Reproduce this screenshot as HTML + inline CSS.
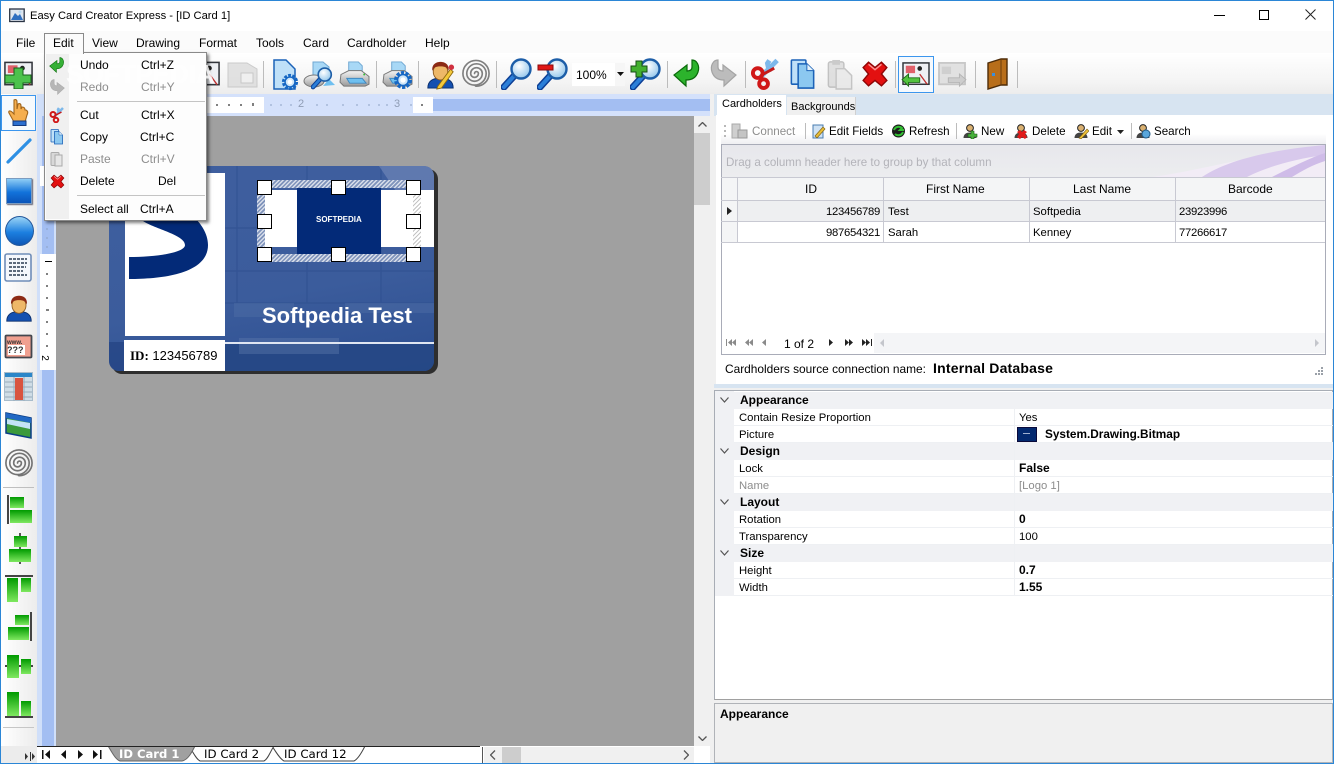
<!DOCTYPE html>
<html><head><meta charset="utf-8"><title>Easy Card Creator Express</title>
<style>
html,body{margin:0;padding:0;background:#f0f0f0}
#w{position:relative;width:1334px;height:764px;overflow:hidden;background:#f0f0f0;font:12px "Liberation Sans",sans-serif;color:#000}
#w div,#w span,#w svg.i{position:absolute}
.t{white-space:nowrap;line-height:14px;height:14px}
.g{color:#8d8d8d}
.b{font-weight:bold}
.sep{width:1px;background:#bcbcbc}
.h{width:13px;height:13px;background:#fff;border:1px solid #000}
.hl{left:721px;width:604px;height:1px;background:#c8c9d2}
.vl{width:1px;background:#c8c9d2}
.gh{left:715px;width:618px;height:17px;background:#f0f1f4}
.pl{left:734px;width:599px;height:1px;background:#eef0f3}
.p{font-size:11.3px;margin-top:1px}
.pb{font-size:12px;font-weight:bold}
.c{font-size:11.3px;margin-top:1px}
.n{letter-spacing:-.28px}
.tb{font-size:11.6px;margin-top:1px}
.ht{background:repeating-linear-gradient(135deg,#d8deea 0 1.400px,#7f93bb 1.400px 3px)}
</style></head><body>
<svg width="0" height="0" style="position:absolute"><defs>
<linearGradient id="gb" x1="0" y1="0" x2="0" y2="1"><stop offset="0" stop-color="#8fd0f5"/><stop offset=".5" stop-color="#1c7be0"/><stop offset="1" stop-color="#0a4fb0"/></linearGradient>
<linearGradient id="gg" x1="0" y1="0" x2="0" y2="1"><stop offset="0" stop-color="#009a00"/><stop offset="1" stop-color="#7fe860"/></linearGradient>
<radialGradient id="gl" cx=".4" cy=".35" r=".7"><stop offset="0" stop-color="#fff"/><stop offset="1" stop-color="#8fc4ea"/></radialGradient>
<linearGradient id="gp" x1="0" y1="0" x2="0" y2="1"><stop offset="0" stop-color="#f4f4f4"/><stop offset="1" stop-color="#9a9a9a"/></linearGradient>
<symbol id="gear" viewBox="0 0 20 20"><circle cx="10" cy="10" r="7" fill="none" stroke="#1667c4" stroke-width="4" stroke-dasharray="3 1.400"/><circle cx="10" cy="10" r="5.500" fill="#cfe6f8" stroke="#1667c4" stroke-width="1.600"/><circle cx="10" cy="10" r="2.600" fill="#fff"/></symbol>
<symbol id="mag" viewBox="0 0 32 32"><path d="M3 29 13 18" stroke="#0d3f95" stroke-width="7" stroke-linecap="round"/><path d="M3 29 13 18" stroke="#2c7fd8" stroke-width="4" stroke-linecap="round"/><circle cx="20" cy="11" r="9.500" fill="url(#gl)" stroke="#1d5ea8" stroke-width="2.400"/></symbol>
<symbol id="fp" viewBox="0 0 32 32"><path d="M15 16a2 2 0 0 1 4 0a4 4 0 0 1-8 0a6 6 0 0 1 12 0a8 8 0 0 1-16 0a10 10 0 0 1 20 0a12 12 0 0 1-24 0a13.500 13.500 0 0 1 27 0a13 13 0 0 1-14 13" fill="none" stroke="#737373" stroke-width="1.700" stroke-linecap="round"/></symbol>
<symbol id="arrow" viewBox="0 0 28 30"><path d="M19 1c5 0 8 6 6 12-2 6-7 8-12 8v6L1 16 14 6v6c3 0 5-1 5-4 0-3 0-5 0-7Z"/></symbol>
<symbol id="xmark" viewBox="0 0 26 26"><path d="M2 7 7 2l6 5 6-5 5 5-5 6 5 6-5 5-6-5-6 5-5-5 5-6Z" fill="#e31010" stroke="#8e0505" stroke-width="1.300"/><path d="M7 4l6 5 6-5" fill="none" stroke="#ff9090" stroke-width="1.400"/></symbol>
<symbol id="sc" viewBox="0 0 32 32"><path d="M28 2 11 19M20 2l-2 3 2 9" fill="none" stroke="#7db8ea" stroke-width="5"/><path d="M14 16 25 10" stroke="#c41a1a" stroke-width="3"/><circle cx="8" cy="15" r="5" fill="none" stroke="#d01818" stroke-width="4"/><circle cx="14" cy="26" r="4.500" fill="none" stroke="#d01818" stroke-width="4"/></symbol>
<symbol id="doc" viewBox="0 0 26 32"><rect x="1" y="1" width="15" height="25" rx="1" fill="#bfe0f8" stroke="#1b62b8" stroke-width="1.600"/><path d="M8 5h9l7 7v18H8Z" fill="#8cc8f0" stroke="#1b62b8" stroke-width="1.600"/><path d="M17 5v7h7" fill="#e5f3fc" stroke="#1b62b8"/></symbol>
<symbol id="prt" viewBox="0 0 34 30"><path d="M11 13V2h10l4 4v7Z" fill="#a8d8f6" stroke="#6fa7d2"/><path d="M3 15 11 11h13l8 6v8l-4 2H6l-4-4Z" fill="url(#gp)" stroke="#777"/><path d="M9 19h16l4 5H12Z" fill="#6fc0f0" stroke="#3e88c0"/><circle cx="27" cy="15" r="1" fill="#39c239"/></symbol>
<symbol id="man" viewBox="0 0 32 32"><path d="M2 31c0-8 6-11 14-11s14 3 14 11Z" fill="#1450b0" stroke="#0b2f6c"/><ellipse cx="16" cy="13" rx="8" ry="9" fill="#eeb868" stroke="#8c5a20"/><path d="M7 12C6 4 12 2 16 2s10 2 9 10c-2-4-4-5-9-5S9 8 7 12Z" fill="#8c2a14"/></symbol>
<symbol id="ca" viewBox="0 0 32 28"><rect x="2" y="1" width="28" height="23" fill="#eef0f4" stroke="#33363c" stroke-width="1.600"/><rect x="5" y="4" width="10" height="8" fill="#e0606a"/><circle cx="20" cy="7" r="2.500" fill="#222"/><path d="m20 13 8 11" stroke="#c03030" stroke-width="1.400"/></symbol>
<symbol id="tb" viewBox="0 0 16 16"><circle cx="8" cy="5" r="3.400" fill="#d9b070" stroke="#222"/><path d="M1.500 15c0-4 3-5.500 6.500-5.500s6.500 1.500 6.500 5.500Z" fill="#444"/></symbol>
</defs></svg>
<div id="w">
<!-- window frame -->
<div style="left:0;top:0;width:1334px;height:1px;background:#2b86d6"></div>
<div style="left:0;top:0;width:1px;height:764px;background:#2b86d6"></div>
<div style="left:1333px;top:0;width:1px;height:764px;background:#2b86d6"></div>
<div style="left:1px;top:1px;width:1332px;height:30px;background:#fff"></div>
<svg class="i" style="left:9px;top:8px" width="16" height="15" viewBox="0 0 16 15"><rect x=".7" y="1" width="14.500" height="12.500" fill="#dfe6ef" stroke="#2a3444" stroke-width="1.300"/><path d="M2 12 6 5l3 3 2-2 3 6Z" fill="#2f6fc0"/><circle cx="11" cy="4" r="1.500" fill="#b9d9f2"/></svg>
<span class="t" style="left:30px;top:9px;font-size:11.200px">Easy Card Creator Express - [ID Card 1]</span>
<div style="left:1214px;top:15px;width:11px;height:1px;background:#000"></div>
<div style="left:1259px;top:10px;width:8px;height:8px;border:1px solid #000"></div>
<svg class="i" style="left:1305px;top:9px" width="11" height="11" viewBox="0 0 11 11"><path d="M.5.500l10 10M10.500.500l-10 10" stroke="#222" fill="none"/></svg>
<!-- menu bar -->
<div style="left:1px;top:31px;width:1332px;height:22px;background:#fbfbfb"></div>
<span class="t" style="left:16px;top:36px">File</span>
<span class="t" style="left:53px;top:36px">Edit</span>
<span class="t" style="left:92px;top:36px">View</span>
<span class="t" style="left:136px;top:36px">Drawing</span>
<span class="t" style="left:199px;top:36px">Format</span>
<span class="t" style="left:256px;top:36px">Tools</span>
<span class="t" style="left:303px;top:36px">Card</span>
<span class="t" style="left:347px;top:36px">Cardholder</span>
<span class="t" style="left:425px;top:36px">Help</span>
<!-- toolbar -->
<div style="left:1px;top:53px;width:1332px;height:41px;background:linear-gradient(#fff,#f4f4f4 70%,#ececec)"></div>
<svg class="i" style="left:3px;top:61px" width="31" height="28"><use href="#ca"/><path d="M11 7h9v7h8v8h-8v6h-9v-6H2v-8h9Z" fill="#4cc24c" stroke="#18601c"/></svg>
<svg class="i" style="left:190px;top:61px" width="31" height="28"><use href="#ca"/></svg>
<svg class="i" style="left:227px;top:61px" width="31" height="27" viewBox="0 0 31 27" opacity=".8"><path d="M1 2 20 2 30 8V26H1Z" fill="#dcdcdc" stroke="#c0c0c0"/><rect x="14" y="12" width="12" height="10" fill="#eee" stroke="#bdbdbd"/></svg>
<div class="sep" style="left:263px;top:61px;height:27px"></div>
<svg class="i" style="left:273px;top:59px" width="26" height="32" viewBox="0 0 26 32"><path d="M1 1h12l9 9v20H1Z" fill="#bfe0f8" stroke="#1b62b8" stroke-width="1.500"/><use href="#gear" x="8" y="14" width="18" height="18"/></svg>
<svg class="i" style="left:303px;top:60px" width="32" height="30" viewBox="0 0 32 30"><path d="M10 2h10l6 5v12H10Z" fill="#a8d8f6" stroke="#6fa7d2"/><ellipse cx="11" cy="21" rx="10" ry="6" fill="url(#gp)" stroke="#777"/><path d="M26 19 32 25 20 26Z" fill="#6fc0f0"/><use href="#mag" x="8" y="6" width="22" height="24"/></svg>
<svg class="i" style="left:338px;top:60px" width="33" height="29"><use href="#prt"/></svg>
<div class="sep" style="left:376px;top:61px;height:27px"></div>
<svg class="i" style="left:381px;top:60px" width="33" height="30" viewBox="0 0 33 30"><use href="#prt" width="33" height="29"/><use href="#gear" x="12" y="10" width="20" height="20"/></svg>
<div class="sep" style="left:418px;top:61px;height:27px"></div>
<svg class="i" style="left:426px;top:59px" width="29" height="31" viewBox="0 0 32 32"><use href="#man"/><path d="M13 29 27 10l3 3-13 18-5 1Z" fill="#f4c93c" stroke="#8f6a10"/><circle cx="28" cy="8" r="3" fill="#d03040"/></svg>
<svg class="i" style="left:460px;top:58px" width="31" height="31" opacity=".9"><use href="#fp"/></svg>
<div class="sep" style="left:496px;top:61px;height:27px"></div>
<svg class="i" style="left:501px;top:58px" width="32" height="32"><use href="#mag"/></svg>
<svg class="i" style="left:537px;top:58px" width="32" height="32"><use href="#mag"/><rect x="1" y="7" width="15" height="5" fill="#e01818" stroke="#8c0a0a"/></svg>
<div style="left:572px;top:63px;width:53px;height:23px;background:#fff"></div>
<div style="left:615px;top:63px;width:10px;height:23px;background:#f6f6f6"></div>
<span class="t" style="left:576px;top:68px">100%</span>
<svg class="i" style="left:617px;top:72px" width="7" height="4"><path d="M0 0h7L3.500 4Z" fill="#111"/></svg>
<svg class="i" style="left:630px;top:58px" width="32" height="32"><use href="#mag"/><path d="M6 3h6v5h5v6h-5v5H6v-5H1V8h5Z" fill="#43b02f" stroke="#144d14"/></svg>
<div class="sep" style="left:667px;top:61px;height:27px"></div>
<svg class="i" style="left:673px;top:59px" width="28" height="30" fill="#2cb32c" stroke="#0a6a0a" stroke-width="1.200"><use href="#arrow"/></svg>
<svg class="i" style="left:709px;top:59px;transform:scaleX(-1)" width="28" height="30" fill="#bcbcbc" stroke="#a4a4a4" stroke-width="1.200"><use href="#arrow"/></svg>
<div class="sep" style="left:745px;top:61px;height:27px"></div>
<svg class="i" style="left:750px;top:58px" width="31" height="32"><use href="#sc"/></svg>
<svg class="i" style="left:790px;top:59px" width="26" height="31"><use href="#doc"/></svg>
<svg class="i" style="left:827px;top:59px" width="26" height="31" viewBox="0 0 26 32" opacity=".75"><rect x="1" y="3" width="16" height="26" rx="2" fill="#d8d8d8" stroke="#b0b0b0" stroke-width="1.500"/><rect x="5" y="1" width="8" height="5" fill="#bbb"/><path d="M9 10h9l7 7v14H9Z" fill="#e6e6e6" stroke="#b5b5b5" stroke-width="1.500"/></svg>
<svg class="i" style="left:861px;top:60px" width="28" height="28"><use href="#xmark"/></svg>
<div class="sep" style="left:895px;top:61px;height:27px"></div>
<div style="left:898px;top:56px;width:34px;height:35px;border:1px solid #3b96ee;background:#f5f9fd"></div>
<svg class="i" style="left:901px;top:62px" width="30" height="26" viewBox="0 0 32 28"><use href="#ca"/><path d="M1 19 8 13v4h12v5H8v4Z" fill="#53c23f" stroke="#1b6a16"/></svg>
<svg class="i" style="left:937px;top:62px" width="30" height="26" viewBox="0 0 32 28" opacity=".8"><rect x="2" y="1" width="28" height="23" fill="#dcdcdc" stroke="#bcbcbc" stroke-width="2"/><rect x="5" y="5" width="10" height="8" fill="#c6c6c6"/><path d="M31 19 24 13v4H12v5h12v4Z" fill="#c4c4c4" stroke="#a5a5a5"/></svg>
<div class="sep" style="left:975px;top:61px;height:27px"></div>
<svg class="i" style="left:987px;top:58px" width="21" height="32" viewBox="0 0 21 32"><path d="M1 5 14 1h6v26h-6L1 31Z" fill="#b86e1a" stroke="#4e2c08" stroke-width="1.400"/><path d="M14 1v26" stroke="#6a3c0c"/><rect x="5" y="15" width="3" height="3" fill="#3d8ed8"/></svg>
<div class="sep" style="left:1017px;top:61px;height:27px"></div>
<!-- left toolbar -->
<div style="left:1px;top:94px;width:36px;height:652px;background:linear-gradient(90deg,#fff,#ececec)"></div>
<div style="left:1px;top:95px;width:33px;height:34px;border:1px solid #3b96ee;background:#f6fafd"></div>
<svg class="i" style="left:7px;top:98px" width="22" height="29" viewBox="0 0 22 29"><path d="M7 2c2-1 3 0 3 2v7l1-5c2-1 3 0 3 2v3l1-2c2 0 3 1 3 3l1 0c2 1 2 3 1 5l-2 7H7l-5-9c-1-2 1-3 3-1l2 2Z" fill="#f5ae4e" stroke="#a0651c" stroke-width="1.100"/><rect x="6" y="23" width="13" height="4.500" fill="#2a6fd0" stroke="#123a80"/></svg>
<svg class="i" style="left:5px;top:137px" width="28" height="30"><path d="M3 25 25 3" stroke="#2e90e4" stroke-width="3.200" stroke-linecap="round"/></svg>
<div style="left:6px;top:178px;width:26px;height:26px;background:linear-gradient(#8fcdf5,#1273db 55%,#0a53b8);box-shadow:1px 1px 1px #667;border:1px solid #7c9cc0;box-sizing:border-box"></div>
<div style="left:5px;top:216px;width:29px;height:30px;border-radius:50%;background:linear-gradient(#9ad4f6,#1c7fe0 55%,#0d56b6);border:1px solid #24589c;box-sizing:border-box"></div>
<svg class="i" style="left:4px;top:253px" width="28" height="30" viewBox="0 0 28 30"><rect x="1" y="1" width="26" height="27" rx="2" fill="#f4f7fc" stroke="#6f8db8" stroke-width="1.600"/><path d="M5 6h18M5 10h18M5 14h17M5 18h14M5 22h18" stroke="#5c6a7c" stroke-width="2" stroke-dasharray="3 1"/></svg>
<svg class="i" style="left:5px;top:292px" width="28" height="32"><use href="#man"/></svg>
<svg class="i" style="left:4px;top:334px" width="29" height="26" viewBox="0 0 29 26"><rect x="1.500" y="1.500" width="26" height="22" rx="1" fill="#f0a090" stroke="#44474e" stroke-width="1.800"/><rect x="4" y="11" width="17" height="10" fill="#fff"/><text x="3" y="10" font-family="Liberation Sans,sans-serif" font-size="6" font-weight="bold" fill="#333">www.</text><text x="3" y="19" font-family="Liberation Sans,sans-serif" font-size="9" font-weight="bold" fill="#333">???</text></svg>
<svg class="i" style="left:4px;top:372px" width="29" height="30" viewBox="0 0 29 30"><rect x=".5" y=".5" width="28" height="28" fill="#cfdde6" stroke="#a8bccb"/><rect x="1" y="1" width="27" height="4" fill="#2b86c8"/><path d="M1 10h27M1 15h27M1 20h27M1 25h27M10 5v24M20 5v24" stroke="#98acba"/><rect x="11" y="6" width="8" height="22" fill="#d9543f"/></svg>
<svg class="i" style="left:5px;top:411px" width="27" height="29" viewBox="0 0 27 29"><path d="M1 2 26 7V27L1 22Z" fill="#3c9a3c" stroke="#0a3d86" stroke-width="1.500"/><path d="M1 2 26 7v5L1 7Z" fill="#2168c4"/><path d="M2 8 25 12V18L2 13Z" fill="#c4e3f6"/></svg>
<svg class="i" style="left:3px;top:447px" width="31" height="32"><use href="#fp"/></svg>
<div style="left:3px;top:487px;width:31px;height:1px;background:#bfbfbf"></div>
<svg class="i" style="left:5px;top:495px" width="29" height="30"><rect x="2" y="0" width="2" height="29" fill="#444"/><rect x="5" y="2" width="14" height="11" fill="url(#gg)"/><rect x="5" y="15" width="22" height="13" fill="url(#gg)"/></svg>
<svg class="i" style="left:8px;top:533px" width="26" height="31"><rect x="11" y="0" width="2" height="31" fill="#555"/><rect x="6" y="3" width="13" height="11" fill="url(#gg)"/><rect x="1" y="16" width="22" height="13" fill="url(#gg)"/></svg>
<svg class="i" style="left:4px;top:574px" width="30" height="30"><rect x="1" y="1" width="28" height="2" fill="#444"/><rect x="3" y="4" width="11" height="24" fill="url(#gg)"/><rect x="17" y="4" width="10" height="14" fill="url(#gg)"/></svg>
<svg class="i" style="left:6px;top:612px" width="29" height="30"><rect x="24" y="0" width="2" height="29" fill="#444"/><rect x="9" y="3" width="14" height="10" fill="url(#gg)"/><rect x="2" y="15" width="21" height="13" fill="url(#gg)"/></svg>
<svg class="i" style="left:4px;top:654px" width="30" height="26"><rect x="1" y="11" width="28" height="2" fill="#444"/><rect x="3" y="1" width="12" height="23" fill="url(#gg)"/><rect x="17" y="5" width="10" height="15" fill="url(#gg)"/></svg>
<svg class="i" style="left:4px;top:690px" width="30" height="30"><rect x="1" y="26" width="28" height="2" fill="#444"/><rect x="3" y="2" width="12" height="24" fill="url(#gg)"/><rect x="17" y="11" width="10" height="15" fill="url(#gg)"/></svg>
<div style="left:3px;top:727px;width:31px;height:1px;background:#c6c6c6"></div>
<div style="left:1px;top:746px;width:36px;height:17px;background:#ececec"></div>
<svg class="i" style="left:25px;top:752px" width="10" height="9"><path d="M0 1v7l3-3.500ZM5 0h1v9H5ZM7 1v7l3-3.500Z" fill="#333"/></svg>
<!-- rulers -->
<div style="left:37px;top:94px;width:673px;height:22px;background:#d4e1fb"></div>
<div style="left:37px;top:94px;width:19px;height:652px;background:#d0dff9"></div>
<div style="left:42px;top:116px;width:12px;height:630px;background:#a3bef2"></div>
<div style="left:433px;top:99px;width:277px;height:12px;background:#a3bef2"></div>
<div style="left:207px;top:97px;width:57px;height:16px;background:#fff"></div>
<div style="left:413px;top:97px;width:20px;height:16px;background:#fff"></div>
<svg class="i" style="left:207px;top:97px" width="226" height="16" viewBox="0 0 226 16"><path d="M10 7v2M22 7v2M34 7v2M46 6v3M215 7v2" stroke="#000"/><path d="M64 7v2M74 7v2M84 7v2M110 7v2M120 7v2M136 7v2M150 7v2M162 7v2M172 7v2M180 7v2M204 7v2" stroke="#8ea3c4"/></svg>
<span class="t" style="left:298px;top:97px;color:#8f9db5;font-size:11px">2</span>
<span class="t" style="left:394px;top:97px;color:#8f9db5;font-size:11px">3</span>
<div style="left:40px;top:254px;width:16px;height:116px;background:#fff"></div>
<div style="left:40px;top:166px;width:19px;height:20px;background:#fff"></div>
<svg class="i" style="left:40px;top:225px" width="16" height="145" viewBox="0 0 16 145"><path d="M6 4h2M6 13h2M6 22h2" stroke="#8ea3c4"/><path d="M5 36.500h7M6 49h2M6 61h2M6 73h2M6 85h3M6 97h2M6 109h2M6 121h2" stroke="#000"/></svg>
<span class="t" style="left:41px;top:351px;font-size:10px;transform:rotate(90deg)">2</span>
<!-- canvas -->
<div style="left:59px;top:116px;width:635px;height:630px;background:#a0a0a0"></div>
<div style="left:56px;top:186px;width:3px;height:560px;background:#a0a0a0"></div>
<!-- card -->
<div style="left:112px;top:169px;width:326px;height:205px;border-radius:10px;background:#2e2e2e"></div>
<div style="left:109px;top:166px;width:325px;height:205px;border-radius:10px;overflow:hidden;background:linear-gradient(170deg,#3f5f9f,#3b5c9c 60%,#2c4e90)">
<svg width="325" height="205" style="position:absolute;left:0;top:0"><path d="M128 0v137M198 0v137M272 0v137M116 137h209M116 105h209M116 62h209" stroke="#2f5090" stroke-width="1.200" fill="none" opacity=".7"/><path d="M270 0h55v40h-28Z" fill="#6d84b6" opacity=".7"/><path d="M0 176h116v29H0Z" fill="#1f3f7e" opacity=".6"/><path d="M116 178h209v27H116Z" fill="#254784" opacity=".85"/><path d="M130 172h100v16H130Z" fill="#5b78aa" opacity=".45"/><path d="M125 137h60v14h-60ZM236 137h89v10H236Z" fill="#4f6ea6" opacity=".45"/></svg>
<div style="left:16px;top:7px;width:100px;height:163px;background:#fff;overflow:hidden"><svg width="100" height="163"><path d="M18 48C30 56 60 62 60 72C60 80 30 84 4 84V106C40 106 83 100 83 72C83 60 75 50 70 45Z" fill="#032a78"/></svg></div>
<div style="left:15px;top:174px;width:101px;height:31px;background:#fff"></div>
<div style="left:116px;top:176px;width:209px;height:1.500px;background:#dfe6f2"></div>
<div style="left:156px;top:24px;width:32px;height:57px;background:#fff"></div>
<div style="left:188px;top:21px;width:84px;height:67px;background:#032a78"></div>
<div style="left:272px;top:24px;width:53px;height:57px;background:#fff"></div>
<div class="ht" style="left:148px;top:14px;width:164px;height:8px"></div>
<div class="ht" style="left:148px;top:88px;width:164px;height:8px"></div>
<div class="ht" style="left:148px;top:14px;width:8px;height:82px"></div>
<div style="left:304px;top:14px;width:8px;height:82px;background:repeating-linear-gradient(135deg,#c4c4c4 0 1px,#fff 1px 3px)"></div>
<span class="t b" style="left:207px;top:47px;color:#fff;font-size:8px">SOFTPEDIA</span>
<span class="t b" style="left:153px;top:138px;color:#fff;font-size:22px;line-height:24px;height:24px;white-space:nowrap">Softpedia Test</span>
<span class="t" style="left:21px;top:182px;font:13px 'Liberation Sans',sans-serif;white-space:nowrap"><b style="font-family:'Liberation Serif',serif">ID:</b> 123456789</span>
</div>
<div class="h" style="left:257px;top:180px"></div><div class="h" style="left:331px;top:180px"></div><div class="h" style="left:406px;top:180px"></div>
<div class="h" style="left:257px;top:214px"></div><div class="h" style="left:406px;top:214px"></div>
<div class="h" style="left:257px;top:247px"></div><div class="h" style="left:331px;top:247px"></div><div class="h" style="left:406px;top:247px"></div>
<!-- popup menu -->
<div style="left:44px;top:33px;width:38px;height:20px;border:1px solid #8a8a8a;border-bottom:none;background:#fbfbfb;z-index:3"></div>
<span class="t" style="left:53px;top:36px;z-index:4">Edit</span>
<div style="left:44px;top:52px;width:161px;height:167px;background:#fdfdfd;border:1px solid #8a8a8a;box-shadow:2px 2px 3px rgba(0,0,0,.5);z-index:2">
<div style="left:1px;top:1px;width:23px;height:165px;background:#f0f0f0"></div>
<span class="t" style="left:21px;top:8px;font-size:26px;font-weight:bold;color:#fff;line-height:26px;height:26px;opacity:.8">SOFTPEDIA</span>
<div style="left:32px;top:48px;width:128px;height:1px;background:#c4c4c4"></div>
<div style="left:32px;top:142px;width:128px;height:1px;background:#c4c4c4"></div>
<span class="t" style="left:35px;top:5px">Undo</span><span class="t" style="left:96px;top:5px">Ctrl+Z</span>
<span class="t g" style="left:35px;top:27px">Redo</span><span class="t g" style="left:96px;top:27px">Ctrl+Y</span>
<span class="t" style="left:35px;top:55px">Cut</span><span class="t" style="left:96px;top:55px">Ctrl+X</span>
<span class="t" style="left:35px;top:77px">Copy</span><span class="t" style="left:95px;top:77px">Ctrl+C</span>
<span class="t g" style="left:35px;top:99px">Paste</span><span class="t g" style="left:96px;top:99px">Ctrl+V</span>
<span class="t" style="left:35px;top:121px">Delete</span><span class="t" style="left:113px;top:121px">Del</span>
<span class="t" style="left:35px;top:149px">Select all</span><span class="t" style="left:95px;top:149px">Ctrl+A</span>
<svg class="i" style="left:4px;top:4px" width="16" height="17" fill="#35b035" stroke="#0a6a0a"><use href="#arrow"/></svg>
<svg class="i" style="left:4px;top:26px;transform:scaleX(-1)" width="16" height="17" fill="#b6b6b6" stroke="#aaa"><use href="#arrow"/></svg>
<svg class="i" style="left:4px;top:54px" width="16" height="16"><use href="#sc"/></svg>
<svg class="i" style="left:5px;top:76px" width="14" height="16"><use href="#doc"/></svg>
<svg class="i" style="left:5px;top:98px" width="14" height="16" viewBox="0 0 26 32"><rect x="1" y="3" width="16" height="26" rx="2" fill="#d8d8d8" stroke="#aaa" stroke-width="2"/><path d="M9 8h14v22H9Z" fill="#e6e6e6" stroke="#aaa" stroke-width="2"/></svg>
<svg class="i" style="left:5px;top:121px" width="15" height="15"><use href="#xmark"/></svg>
</div>
<!-- v scroll -->
<div style="left:694px;top:116px;width:16px;height:630px;background:#f0f0f0"></div>
<div style="left:694px;top:133px;width:16px;height:72px;background:#cdcdcd"></div>
<svg class="i" style="left:698px;top:122px" width="9" height="5"><path d="M.5 4.500 4.500.500l4 4" fill="none" stroke="#555" stroke-width="1.300"/></svg>
<svg class="i" style="left:698px;top:736px" width="9" height="5"><path d="M.5.500l4 4 4-4" fill="none" stroke="#555" stroke-width="1.300"/></svg>
<!-- bottom tabs -->
<div style="left:37px;top:746px;width:673px;height:17px;background:#fff"></div>
<div style="left:1px;top:763px;width:1332px;height:1px;background:#2b86d6"></div>
<svg class="i" style="left:40px;top:749px" width="64" height="11" viewBox="0 0 64 11"><path d="M2 1h1.500v9H2ZM10 1v9L5 5.500ZM26 1v9l-5-4.500ZM38 1v9l5-4.500ZM53 1v9l5-4.500ZM60 1h1.500v9H60Z" fill="#111"/></svg>
<svg class="i" style="left:108px;top:746px" width="260" height="17" viewBox="0 0 260 17"><path d="M164 0C168 6 172 13 176 15H246C250 13 254 6 257 0" fill="#fff" stroke="#444"/><path d="M81 0C85 6 88 13 92 15H156C160 13 162 6 166 0" fill="#fff" stroke="#444"/><path d="M0 0C4 6 7 13 12 15H74C80 14 84 6 87 0Z" fill="#a0a0a0" stroke="#666"/></svg>
<div style="left:37px;top:746px;width:443px;height:1px;background:#222"></div>
<span class="t" style="left:119px;top:747px;color:#fff;font:bold 11.600px/14px 'DejaVu Sans',sans-serif">ID Card 1</span>
<span class="t" style="left:204px;top:747px;font:11.800px/14px 'DejaVu Sans',sans-serif">ID Card 2</span>
<span class="t" style="left:284px;top:747px;font:11.800px/14px 'DejaVu Sans',sans-serif">ID Card 12</span>
<div style="left:484px;top:747px;width:210px;height:16px;background:#f0f0f0"></div>
<div style="left:482px;top:747px;width:1px;height:16px;background:#555"></div>
<div style="left:502px;top:747px;width:19px;height:16px;background:#cdcdcd"></div>
<svg class="i" style="left:490px;top:750px" width="6" height="10"><path d="M5 .500.500 5 5 9.500" fill="none" stroke="#555" stroke-width="1.300"/></svg>
<svg class="i" style="left:683px;top:750px" width="6" height="10"><path d="M1 .500 5.500 5 1 9.500" fill="none" stroke="#555" stroke-width="1.300"/></svg>
<!-- right panel -->
<div style="left:714px;top:94px;width:619px;height:22px;background:#d7e4f1"></div>
<div style="left:716px;top:115px;width:617px;height:269px;background:#fff;border-bottom:1px solid #d0d4d8"></div>
<div style="left:717px;top:95px;width:69px;height:21px;background:#fff;"></div>
<span class="t" style="left:722px;top:97px;font-size:11px">Cardholders</span>
<div style="left:787px;top:97px;width:69px;height:18px;background:#f0f0f0;border-right:1px solid #d0d0d0;box-sizing:border-box"></div>
<span class="t" style="left:791px;top:100px;font-size:11px">Backgrounds</span>
<!-- grid toolbar -->
<div style="left:721px;top:118px;width:605px;height:26px;background:linear-gradient(#fff,#fff 60%,#efeff2)"></div>
<svg class="i" style="left:724px;top:124px" width="3" height="15"><path d="M0 1h2v2H0ZM0 6h2v2H0ZM0 11h2v2H0Z" fill="#b8b8b8"/></svg>
<svg class="i" style="left:731px;top:123px" width="17" height="16"><rect x="1" y="1" width="8" height="14" fill="#cfcfcf" stroke="#aaa"/><rect x="7" y="7" width="9" height="8" fill="#c4c4c4" stroke="#999"/></svg>
<span class="t g tb" style="left:752px;top:124px">Connect</span>
<div class="sep" style="left:805px;top:123px;height:16px"></div>
<svg class="i" style="left:812px;top:124px" width="14" height="15" viewBox="0 0 14 15"><rect x="1" y="1" width="10" height="13" fill="#cfe2f4" stroke="#4a7cb0"/><path d="M3 12 11 3l2 2-8 9Z" fill="#e8bd37" stroke="#80651a" stroke-width=".7"/></svg>
<span class="t tb" style="left:829px;top:124px">Edit Fields</span>
<svg class="i" style="left:891px;top:123px" width="15" height="16" viewBox="0 0 15 16"><circle cx="7.500" cy="8" r="6.500" fill="#1c1c1c"/><path d="M3 7a5 5 0 0 1 8-2l-2 2h4" fill="none" stroke="#33c033" stroke-width="2"/><path d="M12 9a5 5 0 0 1-8 2" fill="none" stroke="#33c033" stroke-width="2"/></svg>
<span class="t tb" style="left:909px;top:124px">Refresh</span>
<div class="sep" style="left:956px;top:123px;height:16px"></div>
<svg class="i" style="left:962px;top:123px" width="16" height="16"><use href="#tb"/><path d="M9 8h3v3h3v3h-3v2H9v-2H6v-3h3Z" fill="#47b03b" stroke="#1a5a17" stroke-width=".6"/></svg>
<span class="t tb" style="left:981px;top:124px">New</span>
<svg class="i" style="left:1013px;top:123px" width="16" height="16"><use href="#tb"/><path d="m7 7 2 2 2-2 3 2-2 2 2 3-2 2-3-2-2 2-3-2 2-3-2-2Z" fill="#e01a1a"/></svg>
<span class="t tb" style="left:1032px;top:124px">Delete</span>
<svg class="i" style="left:1073px;top:123px" width="16" height="16"><use href="#tb"/><path d="M6 15 14 6l2 2-8 8Z" fill="#eec23a" stroke="#7c5d10" stroke-width=".6"/></svg>
<span class="t tb" style="left:1092px;top:124px">Edit</span>
<svg class="i" style="left:1117px;top:130px" width="7" height="4"><path d="M0 0h7L3.500 4Z" fill="#222"/></svg>
<div class="sep" style="left:1131px;top:123px;height:16px"></div>
<svg class="i" style="left:1135px;top:123px" width="16" height="16"><use href="#tb"/><circle cx="11" cy="11" r="4" fill="#59a6dc" stroke="#225a88"/></svg>
<span class="t tb" style="left:1154px;top:124px">Search</span>
<!-- grid -->
<div style="left:721px;top:144px;width:603px;height:209px;border:1px solid #a9acb8;background:#fff"></div>
<div style="left:722px;top:145px;width:603px;height:32px;background:linear-gradient(#e7e7ec,#ecedef);overflow:hidden">
<svg width="603" height="32" style="position:absolute;left:0;top:0"><path d="M430 32C480 25 540 8 600 0h3v32Z" fill="#f2ecf6"/><path d="M480 32C510 12 560 4 603 0v10C570 14 540 24 525 32Z" fill="#d8c9ec"/><path d="M550 32C570 22 590 12 603 8v8C590 20 580 26 570 32Z" fill="#cfbce8"/></svg>
<span class="t" style="left:4px;top:11px;color:#b3b3b9;font-size:11.600px">Drag a column header here to group by that column</span></div>
<div class="hl" style="top:177px"></div>
<div style="left:722px;top:178px;width:603px;height:22px;background:#f4f5f6"></div>
<div class="hl" style="top:200px"></div>
<div style="left:722px;top:201px;width:15px;height:42px;background:#f4f5f6"></div>
<div style="left:737px;top:201px;width:588px;height:20px;background:#eeeff1"></div>
<div class="hl" style="top:221px"></div>
<div class="hl" style="top:242px"></div>
<div class="vl" style="left:737px;top:178px;height:65px"></div>
<div class="vl" style="left:883px;top:178px;height:65px"></div>
<div class="vl" style="left:1029px;top:178px;height:65px"></div>
<div class="vl" style="left:1175px;top:178px;height:65px"></div>
<span class="t" style="left:805px;top:182px">ID</span>
<span class="t" style="left:926px;top:182px">First Name</span>
<span class="t" style="left:1073px;top:182px">Last Name</span>
<span class="t" style="left:1228px;top:182px">Barcode</span>
<svg class="i" style="left:727px;top:207px" width="5" height="8"><path d="M0 0v8l5-4Z" fill="#222"/></svg>
<span class="t c n" style="left:826px;top:204px">123456789</span>
<span class="t c" style="left:888px;top:204px">Test</span>
<span class="t c" style="left:1033px;top:204px">Softpedia</span>
<span class="t c n" style="left:1179px;top:204px">23923996</span>
<span class="t c n" style="left:826px;top:225px">987654321</span>
<span class="t c" style="left:888px;top:225px">Sarah</span>
<span class="t c" style="left:1033px;top:225px">Kenney</span>
<span class="t c n" style="left:1179px;top:225px">77266617</span>
<div style="left:722px;top:333px;width:603px;height:20px;background:#f4f5f7"></div>
<div style="left:722px;top:333px;width:152px;height:20px;background:#fff"></div>
<svg class="i" style="left:725px;top:338px" width="148" height="9" viewBox="0 0 148 9"><path d="M1 1h1v7H1ZM7 1v7L3 4.500ZM11 1v7L7 4.500ZM24 1v7l-4-3.500ZM28 1v7l-4-3.500ZM41 1v7l-4-3.500Z" fill="#8a8a8a"/><path d="M104 1v7l4-3.500ZM120 1v7l4-3.500ZM124 1v7l4-3.500ZM137 1v7l4-3.500ZM141 1v7l4-3.500ZM146 1h1v7h-1Z" fill="#222"/></svg>
<span class="t" style="left:784px;top:337px">1 of 2</span>
<svg class="i" style="left:880px;top:339px;" width="5" height="8"><path d="M4 0v8L0 4Z" fill="#c4c6cc"/></svg>
<svg class="i" style="left:1315px;top:339px;" width="5" height="8"><path d="M0 0v8l4-4Z" fill="#c4c6cc"/></svg>
<span class="t" style="left:725px;top:362px;font-size:11.900px">Cardholders source connection name:</span>
<span class="t b" style="left:933px;top:361px;font-size:14px;letter-spacing:.2px">Internal Database</span>
<svg class="i" style="left:1313px;top:366px" width="11" height="11"><path d="M8 1h2v2H8ZM5 4h2v2H5ZM8 4h2v2H8ZM2 7h2v2H2ZM5 7h2v2H5ZM8 7h2v2H8Z" fill="#9aa0a8"/></svg>
<!-- props -->
<div style="left:714px;top:384px;width:619px;height:4px;background:#d7e4f1"></div>
<div style="left:714px;top:390px;width:619px;height:310px;background:#fff;border:1px solid #a8adb5;border-bottom:1px solid #a0a0a0;box-sizing:border-box"></div>
<div style="left:715px;top:391px;width:19px;height:205px;background:#f0f1f4"></div>
<div class="gh" style="top:392px"></div><div class="gh" style="top:443px"></div><div class="gh" style="top:494px"></div><div class="gh" style="top:545px"></div>
<div class="pl" style="top:425px"></div><div class="pl" style="top:442px"></div><div class="pl" style="top:476px"></div><div class="pl" style="top:493px"></div><div class="pl" style="top:527px"></div><div class="pl" style="top:544px"></div><div class="pl" style="top:578px"></div><div class="pl" style="top:595px"></div>
<div class="vl" style="left:1014px;top:409px;height:187px;background:#eef0f3"></div>
<svg class="i" style="left:720px;top:397px" width="9" height="6"><path d="M.5.500 4.500 5l4-4.500" fill="none" stroke="#555" stroke-width="1.200"/></svg>
<svg class="i" style="left:720px;top:448px" width="9" height="6"><path d="M.5.500 4.500 5l4-4.500" fill="none" stroke="#555" stroke-width="1.200"/></svg>
<svg class="i" style="left:720px;top:499px" width="9" height="6"><path d="M.5.500 4.500 5l4-4.500" fill="none" stroke="#555" stroke-width="1.200"/></svg>
<svg class="i" style="left:720px;top:550px" width="9" height="6"><path d="M.5.500 4.500 5l4-4.500" fill="none" stroke="#555" stroke-width="1.200"/></svg>
<span class="t pb" style="left:740px;top:393px">Appearance</span>
<span class="t p" style="left:739px;top:410px">Contain Resize Proportion</span><span class="t p" style="left:1019px;top:410px">Yes</span>
<span class="t p" style="left:739px;top:427px">Picture</span>
<div style="left:1017px;top:427px;width:18px;height:13px;background:#03296f;border:1px solid #0a0a3a"></div><div style="left:1023px;top:433px;width:7px;height:1px;background:#9fb0d0"></div>
<span class="t pb" style="left:1045px;top:427px;font-size:11.800px">System.Drawing.Bitmap</span>
<span class="t pb" style="left:740px;top:444px">Design</span>
<span class="t p" style="left:739px;top:461px">Lock</span><span class="t pb" style="left:1019px;top:461px">False</span>
<span class="t p" style="left:739px;top:478px;color:#8d8d8d">Name</span><span class="t p" style="left:1019px;top:478px;color:#8d8d8d">[Logo 1]</span>
<span class="t pb" style="left:740px;top:495px">Layout</span>
<span class="t p" style="left:739px;top:512px">Rotation</span><span class="t pb" style="left:1019px;top:512px">0</span>
<span class="t p" style="left:739px;top:529px">Transparency</span><span class="t p" style="left:1019px;top:529px">100</span>
<span class="t pb" style="left:740px;top:546px">Size</span>
<span class="t p" style="left:739px;top:563px">Height</span><span class="t pb" style="left:1019px;top:563px">0.7</span>
<span class="t p" style="left:739px;top:580px">Width</span><span class="t pb" style="left:1019px;top:580px">1.55</span>
<div style="left:714px;top:703px;width:619px;height:60px;background:#f0f0f0;border:1px solid #b0b3b8;box-sizing:border-box"></div>
<span class="t pb" style="left:720px;top:707px">Appearance</span>
</div>
</body></html>
